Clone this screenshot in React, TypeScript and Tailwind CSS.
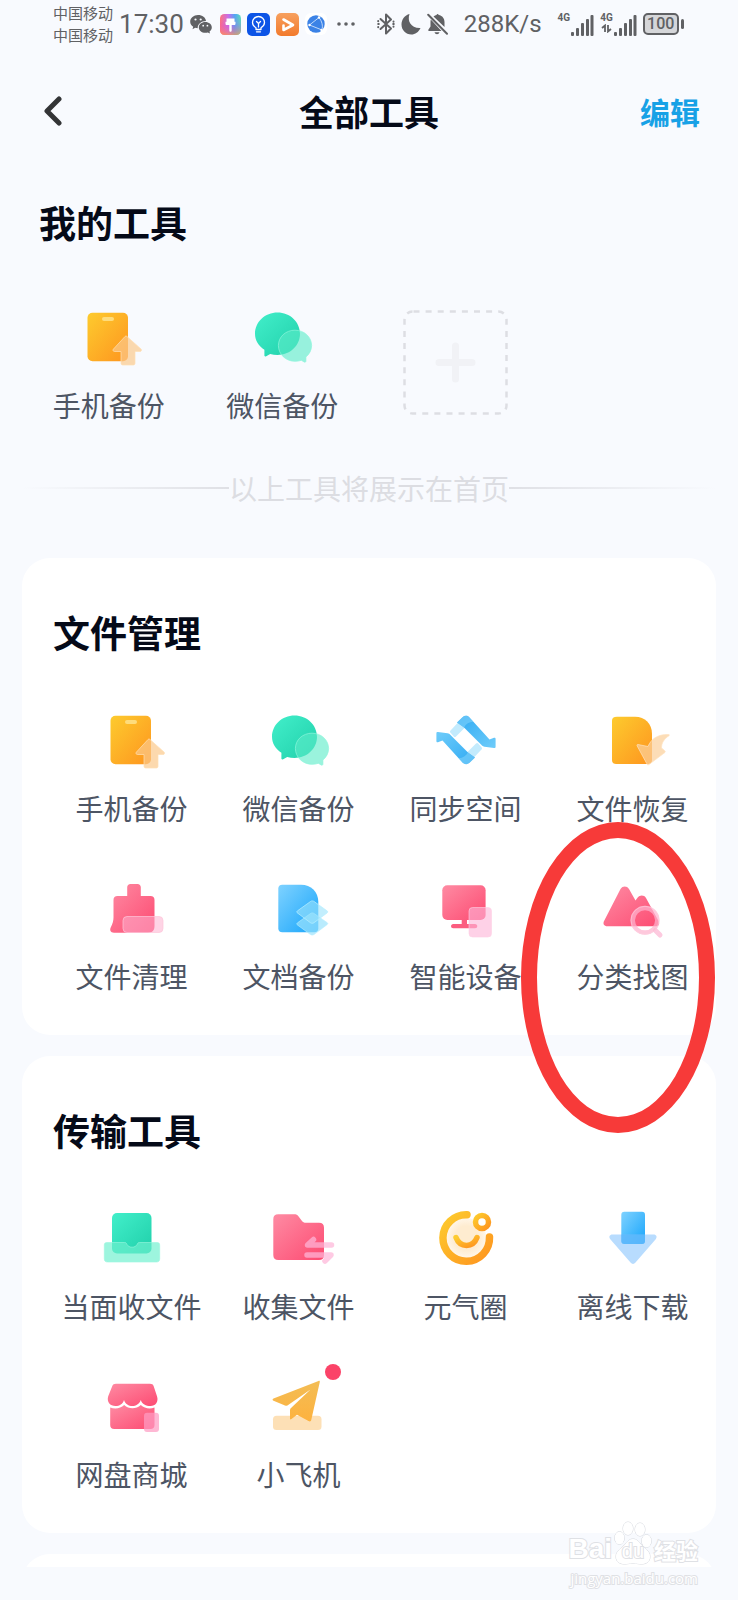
import type { ReactNode } from 'react';

interface Tool {
  name: string;
  icon: ReactNode;
  badge?: boolean;
  marked?: boolean;
}

// degradês compartilhados pelos ícones
function IconDefs() {
  return (
    <svg className="absolute h-0 w-0" aria-hidden="true">
      <defs>
        <linearGradient id="orange" x1="0" y1="0" x2="1" y2="1">
          <stop offset="0" stopColor="#fdcb2e" />
          <stop offset="1" stopColor="#fe951f" />
        </linearGradient>
        <linearGradient id="green" x1="0" y1="0" x2="1" y2="1">
          <stop offset="0" stopColor="#42efca" />
          <stop offset="1" stopColor="#20cfaa" />
        </linearGradient>
        <linearGradient id="pink" x1="0" y1="0" x2="1" y2="1">
          <stop offset="0" stopColor="#fe8ba3" />
          <stop offset="1" stopColor="#fd4b72" />
        </linearGradient>
        <linearGradient id="blue" x1="0" y1="0" x2="1" y2="1">
          <stop offset="0" stopColor="#7fd2ff" />
          <stop offset="1" stopColor="#18a5fb" />
        </linearGradient>
        <linearGradient id="plane" x1="0" y1="0" x2="0" y2="1">
          <stop offset="0" stopColor="#f3bd55" />
          <stop offset="1" stopColor="#fdb23f" />
        </linearGradient>
        <linearGradient id="band" x1="0" y1="0" x2="1" y2="1">
          <stop offset="0" stopColor="#2fa9f3" />
          <stop offset="0.45" stopColor="#4bb9f6" />
          <stop offset="1" stopColor="#6fccfa" />
        </linearGradient>
        <radialGradient id="cream">
          <stop offset="0.6" stopColor="#feecd0" />
          <stop offset="1" stopColor="#fff6e8" />
        </radialGradient>
        <linearGradient id="rainbow" x1="0" y1="0" x2="1" y2="0">
          <stop offset="0" stopColor="#ff6f7d" />
          <stop offset="0.4" stopColor="#c46bf0" />
          <stop offset="0.7" stopColor="#4fa4f8" />
          <stop offset="1" stopColor="#52dcc0" />
        </linearGradient>
        <linearGradient id="sunset" x1="0" y1="0" x2="0" y2="1">
          <stop offset="0" stopColor="#ffcf4d" stopOpacity="0" />
          <stop offset="0.5" stopColor="#e84fd0" stopOpacity="0.2" />
          <stop offset="1" stopColor="#ff9a4a" stopOpacity="0.7" />
        </linearGradient>
        <linearGradient id="player" x1="0" y1="0" x2="0" y2="1">
          <stop offset="0" stopColor="#f7a05f" />
          <stop offset="1" stopColor="#f27a2c" />
        </linearGradient>
      </defs>
    </svg>
  );
}

function Icon({ children }: { children: ReactNode }) {
  return (
    <svg viewBox="0 0 84 84" className="h-[84px] w-[84px]" fill="none" aria-hidden="true">
      {children}
    </svg>
  );
}

const phoneIcon = (
  <Icon>
    <rect x="20.500" y="17.700" width="40.500" height="48.500" rx="5" fill="url(#orange)" />
    <rect x="35" y="22" width="12" height="4" rx="2" fill="#fedc7c" />
    <path d="M60 41.500 74 54c1 1 .5 2.500-1 2.500h-5V68c0 1.500-.5 2-2 2h-10c-1.500 0-2-.5-2-2V56.500h-6.500c-1.500 0-2-1.500-1-2.500L58 41.500c.7-.6 1.300-.6 2 0z" fill="#fbc98b" fillOpacity="0.7" stroke="#ffe0b5" strokeOpacity="0.7" />
  </Icon>
);

const wechatIcon = (
  <Icon>
    <path d="M37.500 17.500c12.500 0 22.500 9.400 22.500 21.300S50 60 37.500 60c-2.500 0-5-.3-7.300-1l-4 2.300c-1.200.5-1.900 0-1.800-1v-5.500C18.500 51 15 45.500 15 38.800c0-11.900 10-21.300 22.500-21.300z" fill="url(#green)" />
    <path d="M55 35.200c9.200 0 16.600 6.700 16.600 15.300 0 4.600-2.200 8.600-5.700 11.500v4c0 1-.7 1.500-1.600 1l-3-1.700c-2 .7-4.100 1-6.300 1-9.200 0-16.600-7-16.600-15.800S45.800 35.200 55 35.200z" fill="#5cecc8" fillOpacity="0.62" stroke="#8df5dc" strokeOpacity="0.7" />
  </Icon>
);

const syncHalf = (
  <>
    <path d="M26.500 32.500 35 23.500l6.500 5.500-9.500 9.500c-.8.7-1.500.7-2.200 0l-3.500-4c-.5-.7-.4-1.300.2-2z" fill="#c3ebfd" />
    <path d="M33 24.500l5.500-5.300c2-1.900 4.800-1.900 6.800 0L65.500 41.500l4.500-1.700c1-.3 1.600.2 1.600 1.200v7.700c0 1-.6 1.400-1.600 1.200L60.500 48.700c-1.300-.2-2-.6-3-1.600L40 29.500z" fill="url(#band)" />
    <path d="M33 24.500l5.500-5.300c2-1.900 4.800-1.900 6.800 0l4.200 4.600c-4.500.2-7.500 2.200-9.500 5.700z" fill="#8bd8fb" fillOpacity="0.5" />
  </>
);

const syncIcon = (
  <Icon>
    {syncHalf}
    <g transform="rotate(180 42 42)">{syncHalf}</g>
  </Icon>
);

const restoreIcon = (
  <Icon>
    <path d="M26 18.700h18c10 0 17 7 17 17V62c0 2.600-1.400 4-4 4H25c-2.600 0-4-1.400-4-4V22.700c0-2.600 1.400-4 5-4z" fill="url(#orange)" />
    <path d="M47 46.500l10 2c3-7.500 10-12.500 20.500-12 1 0 1.200.6.500 1.200-5 3.300-7.500 7.300-7.500 12.300l3 2.500c1 .8.900 1.700 0 2.300L58 66.500c-1 .7-1.800.4-2.200-.8l-9.600-17.700c-.5-1 0-1.700.8-1.500z" fill="#fbd09b" fillOpacity="0.72" stroke="#ffe3bf" strokeOpacity="0.7" />
  </Icon>
);

const cleanIcon = (
  <Icon>
    <path d="M40.500 18h7c2 0 3.300 1.300 3.300 3.300V30h9.700c2.600 0 4 1.400 4 4v26c0 4.500-2 6.700-6.500 6.700H24c-3.500 0-4.500-2.700-3.300-5.200 2-4 2.800-7 2.800-10V34c0-2.600 1.400-4 4-4h9.700v-8.700c0-2 1.300-3.300 3.300-3.300z" fill="url(#pink)" />
    <rect x="33" y="50.500" width="40" height="16" rx="4" fill="#fdb1d0" fillOpacity="0.55" stroke="#fdc6da" strokeOpacity="0.7" />
  </Icon>
);

const docIcon = (
  <Icon>
    <path d="M25.300 18.700H44c10 0 17.300 7 17.300 17v26.600c0 2.600-1.400 4-4 4h-32c-2.600 0-4-1.400-4-4V22.700c0-2.600 1.400-4 4-4z" fill="url(#blue)" />
    <path d="M53.500 47.500c1.200-.8 2.400-.8 3.600 0L70 56.500c1 .7 1 1.400 0 2.200l-13 9.800c-1.200.8-2.400.8-3.600 0L40.500 59c-1-.7-1-1.400 0-2.200z" fill="#9be2fc" fillOpacity="0.7" stroke="#b8efff" strokeOpacity="0.6" />
    <path d="M53.500 35.500c1.200-.8 2.400-.8 3.600 0L70 44.800c1 .7 1 1.400 0 2.200L57 56.700c-1.200.8-2.400.8-3.600 0L40.500 47c-1-.7-1-1.400 0-2.200z" fill="#9be2fc" fillOpacity="0.6" stroke="#b8efff" strokeOpacity="0.7" />
  </Icon>
);

const deviceIcon = (
  <Icon>
    <rect x="18.300" y="19.300" width="43.300" height="34.700" rx="5" fill="url(#pink)" />
    <path d="M37.700 54H43v4h8c3 0 3 4.300 0 4.300H29.300c-3 0-3-4.300 0-4.300h8.400z" fill="#fb5d80" />
    <rect x="45" y="41.500" width="22.500" height="29.500" rx="3.500" fill="#fdb4d8" fillOpacity="0.62" stroke="#fdd0e5" strokeOpacity="0.6" />
  </Icon>
);

const pictureIcon = (
  <Icon>
    <path d="M29.500 23c2-3.300 6.500-3.300 8.500 0l6.500 11.500 2-2.700c2.300-3 6.500-3 8.500.2L67.500 55c1.500 2.800.3 5.300-3 5.300H16.500c-3.500 0-5-2.500-3.300-5.500z" fill="url(#pink)" />
    <path d="M64.500 64.500 69 69" stroke="#fdcadf" strokeWidth="5" strokeLinecap="round" />
    <circle cx="54" cy="54.300" r="12.300" stroke="#fdb3cf" strokeOpacity="0.72" strokeWidth="4.500" />
    <circle cx="54" cy="54.300" r="14" stroke="#fed0e0" strokeOpacity="0.6" />
  </Icon>
);

const receiveIcon = (
  <Icon>
    <rect x="22" y="17" width="39.500" height="40.500" rx="5" fill="url(#green)" />
    <path d="M17 46.500h17.500c1.500 0 1.800.5 2.300 1.700 2 4 8.500 4 10.500 0 .5-1.200.8-1.700 2.300-1.700H67c2 0 2.700.8 2.700 2.700v13.500c0 2.200-1.100 3.300-3.300 3.300H17.600c-2.200 0-3.300-1.100-3.300-3.300V49.200c0-1.900.7-2.700 2.700-2.700z" fill="#6ff0cf" fillOpacity="0.68" stroke="#9bf7e0" strokeOpacity="0.6" />
  </Icon>
);

const collectIcon = (
  <Icon>
    <path d="M21.300 18.300h15.500c2.500 0 3.700.6 5 2.400l3 4c1.200 1.500 2.200 2 4 2H62c3.400 0 5 1.600 5 5V59c0 3.400-1.600 5-5 5H21.300c-3.400 0-5-1.600-5-5V23.300c0-3.400 1.600-5 5-5z" fill="url(#pink)" />
    <path d="M74.500 49H50.500L56.500 43.500M50 59H74L68 65" stroke="#fdb5d8" strokeOpacity="0.72" strokeWidth="5.500" strokeLinecap="round" strokeLinejoin="round" />
  </Icon>
);

const energyIcon = (
  <Icon>
    <circle cx="42.300" cy="42" r="20" fill="url(#cream)" />
    <path d="M43 18.700A23.300 23.300 0 1 0 65.500 41" stroke="url(#orange)" strokeWidth="7.500" strokeLinecap="round" />
    <path d="M32 41.500c4 10.500 17 10.500 21 0" stroke="url(#orange)" strokeWidth="5.500" strokeLinecap="round" />
    <circle cx="58" cy="26" r="6.500" fill="#fff" stroke="url(#orange)" strokeWidth="5.500" />
  </Icon>
);

const downloadIcon = (
  <Icon>
    <rect x="30.300" y="15.700" width="23.700" height="32.300" rx="3" fill="url(#blue)" />
    <path d="M21.500 38.500h41c3 0 4 2.500 2.200 4.700L44.500 66.500c-1.600 1.900-3.400 1.900-5 0L19.300 43.200c-1.800-2.200-.8-4.700 2.200-4.700z" fill="#8cc6fe" fillOpacity="0.62" />
    <path d="M30.300 38.500H54V45c0 2-1 3-3 3H33.300c-2 0-3-1-3-3z" fill="#4cb3fb" fillOpacity="0.55" />
  </Icon>
);

const shopIcon = (
  <Icon>
    <path d="M20.200 43.500c5 2 10.300 1 14-2.500 4.500 4.300 12 4.300 16.600 0 3.700 3.500 9 4.500 13.700 2.500V61c0 2.600-1.400 4-4 4H24.200c-2.600 0-4-1.400-4-4z" fill="url(#pink)" />
    <path d="M26 19.700h34c2 0 3 .7 3.700 2.500l3.300 10c1.800 5.500-1.500 9.800-6.500 9.800-4.500 0-8.500-2-9.700-6-1.500 4-5 6-8.500 6s-7-2-8.300-6c-1.200 4-4.500 6-8.500 6-5.500 0-9-4.300-7.300-9.800l4-10c.7-1.800 1.800-2.500 3.800-2.500z" fill="url(#pink)" />
    <rect x="54" y="48.700" width="15" height="19.300" rx="3" fill="#fd9dc4" fillOpacity="0.72" />
  </Icon>
);

const planeIcon = (
  <Icon>
    <rect x="16" y="51.700" width="48.500" height="14.300" rx="3.500" fill="#fde0b6" />
    <path d="M61.500 17 16.500 34.500c-1.200.6-1.200 1.500 0 2.200l11.500 4.800c1.500.6 2.300.4 3.500-.7L53.500 25.500 34 44c-.8.800-1 1.500-1 2.500v8c0 1.200.7 1.400 1.500.6l5.500-4.300 11.500 6.200c1.500.8 2.500.4 2.800-1.300L62.800 18c.1-1-.4-1.400-1.300-1z" fill="url(#plane)" />
  </Icon>
);

const myTools: Tool[] = [
  { name: '手机备份', icon: phoneIcon },
  { name: '微信备份', icon: wechatIcon },
];

const sections: { title: string; tools: Tool[] }[] = [
  {
    title: '文件管理',
    tools: [
      { name: '手机备份', icon: phoneIcon },
      { name: '微信备份', icon: wechatIcon },
      { name: '同步空间', icon: syncIcon },
      { name: '文件恢复', icon: restoreIcon },
      { name: '文件清理', icon: cleanIcon },
      { name: '文档备份', icon: docIcon },
      { name: '智能设备', icon: deviceIcon },
      { name: '分类找图', icon: pictureIcon, marked: true },
    ],
  },
  {
    title: '传输工具',
    tools: [
      { name: '当面收文件', icon: receiveIcon },
      { name: '收集文件', icon: collectIcon },
      { name: '元气圈', icon: energyIcon },
      { name: '离线下载', icon: downloadIcon },
      { name: '网盘商城', icon: shopIcon },
      { name: '小飞机', icon: planeIcon, badge: true },
    ],
  },
];

function ToolItem({ tool }: { tool: Tool }) {
  return (
    <li className="relative">
      <button type="button" className="flex w-full flex-col items-center gap-1.5">
        <span className="relative">
          {tool.icon}
          {tool.badge && (
            <span className="absolute right-0 top-0 h-4 w-4 rounded-full bg-[#fb4368]" />
          )}
        </span>
        <span className="whitespace-nowrap text-[28px] leading-10 text-[#4d5564]">{tool.name}</span>
      </button>
      {tool.marked && (
        <span className="pointer-events-none absolute -left-7 -top-11 z-10 h-[311px] w-[194px] rounded-[50%] border-[16px] border-[#f73a39]" />
      )}
    </li>
  );
}

function Signal({ data }: { data?: boolean }) {
  return (
    <span className="flex h-6 items-end">
      <span className="flex h-full flex-col items-center">
        <span className="font-['Roboto',sans-serif] text-[10px] font-bold leading-3">4G</span>
        {data && (
          <svg viewBox="0 0 11 9" className="h-[9px] w-[11px]" fill="none" stroke="currentColor" strokeWidth="1.8">
            <path d="M1 4 4 1.500V8M10 5 7 7.500V1" />
          </svg>
        )}
      </span>
      <svg viewBox="0 0 24 22" className="h-[22px] w-6" fill="currentColor">
        <rect x="1" y="18" width="3" height="4" rx="1" />
        <rect x="6" y="14" width="3" height="8" rx="1" />
        <rect x="11" y="9" width="3" height="13" rx="1" />
        <rect x="16" y="5" width="3" height="17" rx="1" />
        <rect x="20.500" y="1" width="3" height="21" rx="1" />
      </svg>
    </span>
  );
}

function StatusBar() {
  return (
    <div className="flex h-12 items-center gap-1.5 pl-[53px] text-[#606164]">
      <div className="whitespace-nowrap text-[15px] leading-[22px]">
        <div>中国移动</div>
        <div>中国移动</div>
      </div>
      <span className="font-['Roboto',sans-serif] text-[26px] leading-8">17:30</span>
      <svg viewBox="0 0 22 20" className="h-5 w-[22px] shrink-0" fill="currentColor">
        <path d="M8 1c4.300 0 7.700 2.600 8 6-5 .1-8.500 3.200-8.300 7.200-.9 0-1.700-.1-2.500-.4L2.500 15.200l.7-2.500C1.200 11.500.2 9.800.2 7.700.2 4 3.700 1 8 1z" />
        <path d="M15.300 8c3.600 0 6.500 2.400 6.500 5.400 0 1.700-.9 3.200-2.300 4.200l.5 2-2.200-1.200c-.8.300-1.600.4-2.500.4-3.600 0-6.500-2.400-6.500-5.400S11.700 8 15.300 8z" />
        <g fill="#f8fafe">
          <circle cx="5.500" cy="5.500" r="1.100" />
          <circle cx="10.700" cy="5.500" r="1.100" />
          <circle cx="13.200" cy="11.700" r=".9" />
          <circle cx="17.400" cy="11.700" r=".9" />
        </g>
      </svg>
      <svg viewBox="0 0 21 21" className="ml-0.5 h-[21px] w-[21px] shrink-0">
        <rect width="21" height="21" rx="4.500" fill="url(#rainbow)" />
        <rect width="21" height="21" rx="4.500" fill="url(#sunset)" />
        <path d="M6.500 4.500h8v3.300h1v2c0 .8-.5 1.300-1.300 1.300h-2.500v5.200c0 2-2.400 2-2.400 0v-5.200H6.800c-.8 0-1.300-.5-1.300-1.300v-2h1z" fill="#fff" />
      </svg>
      <svg viewBox="0 0 23 23" className="h-[23px] w-[23px] shrink-0" fill="none" stroke="#fff">
        <rect width="23" height="23" rx="5" fill="#0c54e6" stroke="none" />
        <path d="M9 16.500v-1.800C6.800 13.500 5.500 11.600 5.500 9.500a6 6 0 0 1 12 0c0 2.100-1.300 4-3.500 5.200v1.800zM9.500 18.800h4M11.500 14V10.500M9.500 8.500l2 2 2-2" strokeWidth="1.300" strokeLinecap="round" strokeLinejoin="round" />
      </svg>
      <svg viewBox="0 0 23 23" className="h-[23px] w-[23px] shrink-0" fill="none">
        <rect width="23" height="23" rx="5" fill="url(#player)" />
        <path d="M7.500 6.500 17 12 7.500 17V12.500" stroke="#fff" strokeWidth="2.600" strokeLinejoin="round" strokeLinecap="round" />
      </svg>
      <svg viewBox="0 0 22 22" className="h-[22px] w-[22px] shrink-0" fill="none">
        <rect width="22" height="22" rx="6" fill="#fff" />
        <circle cx="11" cy="11" r="8.700" fill="#3b82e6" />
        <path d="M4.500 12 14 4.500M17 17 4.500 12M14 4.500c3 4 4 8 3 12.500" stroke="#cfe2fc" strokeWidth=".9" />
        <circle cx="14" cy="4.500" r="1.200" fill="#fff" />
        <circle cx="4.500" cy="12" r="1.200" fill="#fff" />
        <circle cx="16.500" cy="17" r="1.200" fill="#fff" />
      </svg>
      <svg viewBox="0 0 18 4" className="ml-1 h-1 w-[18px] shrink-0" fill="currentColor">
        <circle cx="2" cy="2" r="1.800" />
        <circle cx="9" cy="2" r="1.800" />
        <circle cx="16" cy="2" r="1.800" />
      </svg>
      <svg viewBox="0 0 18 24" className="ml-4 h-6 w-[18px] shrink-0" fill="none" stroke="currentColor" strokeWidth="2" strokeLinejoin="round" strokeLinecap="round">
        <path d="M3.500 7 14 16.500 9 21.500V2.500L14 7.500 3.500 17M1.200 12h.6M16.200 12h.6M1.200 9v.2M1.200 15v.2M16.500 9.500v.2M16.500 14.500v.2" />
      </svg>
      <svg viewBox="0 0 20 22" className="h-[22px] w-5 shrink-0" fill="currentColor">
        <path d="M8.500 1C6 8 10 15.500 19.500 15 17.500 19.200 14.300 21.500 10.300 21.500 4.800 21.500.5 17 .5 11.500.5 6.500 3.800 2.200 8.500 1z" />
      </svg>
      <svg viewBox="0 0 21 22" className="h-[22px] w-[21px] shrink-0" fill="currentColor">
        <path d="M6.500 3.500C7.500 2.700 8.600 2.200 9.500 2c.3-1.300 1.900-1.300 2.200 0C15.500 2.700 17.500 5.400 17.500 9v5zM3.800 6.500 14.500 18H2c-.8 0-1-.8-.5-1.400L3.500 13.500V9c0-1 .1-1.700.3-2.500zM7.500 19.300h5c-.6 2.600-4.400 2.600-5 0z" />
        <path d="M1.200 1.700 20 20.700" stroke="currentColor" strokeWidth="2" strokeLinecap="round" />
      </svg>
      <span className="ml-2.5 font-['Roboto',sans-serif] text-[24px] leading-8">288K/s</span>
      <span className="ml-2.5 flex items-center gap-1.5">
        <Signal />
        <Signal data />
      </span>
      <span className="flex items-center gap-0.5">
        <span className="flex h-[22px] w-9 items-center justify-center rounded-[5px] border-2 border-[#606164] bg-[#d5d6d9] font-['Roboto',sans-serif] text-[16px] font-medium leading-4">
          100
        </span>
        <span className="h-2.5 w-[3px] rounded-sm bg-[#606164]" />
      </span>
    </div>
  );
}

function Watermark() {
  return (
    <div className="pointer-events-none absolute bottom-3 right-10 z-20 text-white [paint-order:stroke] [-webkit-text-stroke:2px_#dfe1e5]">
      <div className="flex items-end justify-end gap-0.5">
        <span className="font-['Liberation_Sans',sans-serif] text-[28px] font-bold leading-8">Bai</span>
        <span className="relative">
          <svg viewBox="0 0 38 44" className="h-11 w-[38px]" fill="#fff" stroke="#d5d8de">
            <ellipse cx="5.500" cy="17" rx="4.800" ry="6.300" />
            <ellipse cx="14" cy="7.500" rx="5" ry="6.500" />
            <ellipse cx="26" cy="8.500" rx="5" ry="6.500" />
            <ellipse cx="32.500" cy="20" rx="4.800" ry="6.300" />
            <path d="M19 18c4 0 6 3 8.500 6S36 30 36 35.500 32 43 27.500 43c-3 0-5-.8-8.500-.8s-5.500.8-8.500.8C6 43 2 41 2 35.500S8 27 10.500 24 15 18 19 18z" />
          </svg>
          <span className="absolute inset-x-0 bottom-0.5 text-center font-['Liberation_Sans',sans-serif] text-[20px] leading-6">
            du
          </span>
        </span>
        <span className="font-['Noto_Sans_CJK_SC',sans-serif] text-[22px] font-bold leading-8">经验</span>
      </div>
      <div className="mt-0.5 text-right font-['Open_Sans',sans-serif] text-[15px] leading-[22px]">
        jingyan.baidu.com
      </div>
    </div>
  );
}

export default function App() {
  return (
    <div className="relative overflow-hidden bg-[#f8fafe] font-['Noto_Sans_CJK_SC',sans-serif]">
      <IconDefs />
      <StatusBar />

      <header className="grid h-[126px] grid-cols-3 items-center px-[38px]">
        <button type="button" aria-label="返回" className="justify-self-start pl-1">
          <svg viewBox="0 0 20 32" className="h-8 w-5" fill="none" stroke="#333436" strokeWidth="5" strokeLinecap="round" strokeLinejoin="round">
            <path d="M17 4 5 16l12 12" />
          </svg>
        </button>
        <h1 className="justify-self-center whitespace-nowrap text-[35px] font-bold leading-10 text-[#050a18]">
          全部工具
        </h1>
        <button type="button" className="justify-self-end text-[30px] font-bold leading-10 text-[#17a1e6]">
          编辑
        </button>
      </header>

      {/* Ferramentas fixadas */}
      <section className="px-[22px] pt-7">
        <h2 className="pl-[17px] text-[37px] font-bold leading-10 text-[#050a18]">我的工具</h2>
        <ul className="mt-[53px] grid grid-cols-4">
          {myTools.map((tool) => (
            <ToolItem key={tool.name} tool={tool} />
          ))}
          <li className="flex justify-center pt-[15px]">
            <button type="button" aria-label="添加" className="h-[105px] w-[105px]">
              <svg viewBox="0 0 105 105" className="h-full w-full" fill="none">
                <rect x="1.500" y="1.500" width="102" height="102" rx="8" stroke="#dddee3" strokeWidth="2.500" strokeDasharray="6 6.100" strokeDashoffset="-1" />
                <path d="M52.500 36v33M36 52.500h33" stroke="#f1f2f6" strokeWidth="7" strokeLinecap="round" />
              </svg>
            </button>
          </li>
        </ul>
        <div className="mt-[43px] flex items-center">
          <span className="h-0.5 flex-1 bg-linear-to-l from-[#dfe0e5] to-transparent" />
          <span className="text-[28px] leading-10 text-[#dcdde2]">以上工具将展示在首页</span>
          <span className="h-0.5 flex-1 bg-linear-to-r from-[#dfe0e5] to-transparent" />
        </div>
      </section>

      <main className="mt-[50px] flex flex-col gap-[21px] px-[22px]">
        {sections.map((section) => (
          <section key={section.title} className="rounded-[28px] bg-white pb-[39px] pt-[54px]">
            <h2 className="pl-[31px] text-[37px] font-bold leading-10 text-[#050a18]">{section.title}</h2>
            <ul className="mt-[46px] grid grid-cols-4 gap-y-[38px] pl-[26px]">
              {section.tools.map((tool) => (
                <ToolItem key={tool.name} tool={tool} />
              ))}
            </ul>
          </section>
        ))}
        {/* topo do próximo card, cortado pela barra do sistema */}
        <div className="h-[13px] overflow-hidden">
          <div className="h-16 rounded-[28px] bg-white" />
        </div>
      </main>

      <div className="h-[34px]" />
      <Watermark />
    </div>
  );
}
